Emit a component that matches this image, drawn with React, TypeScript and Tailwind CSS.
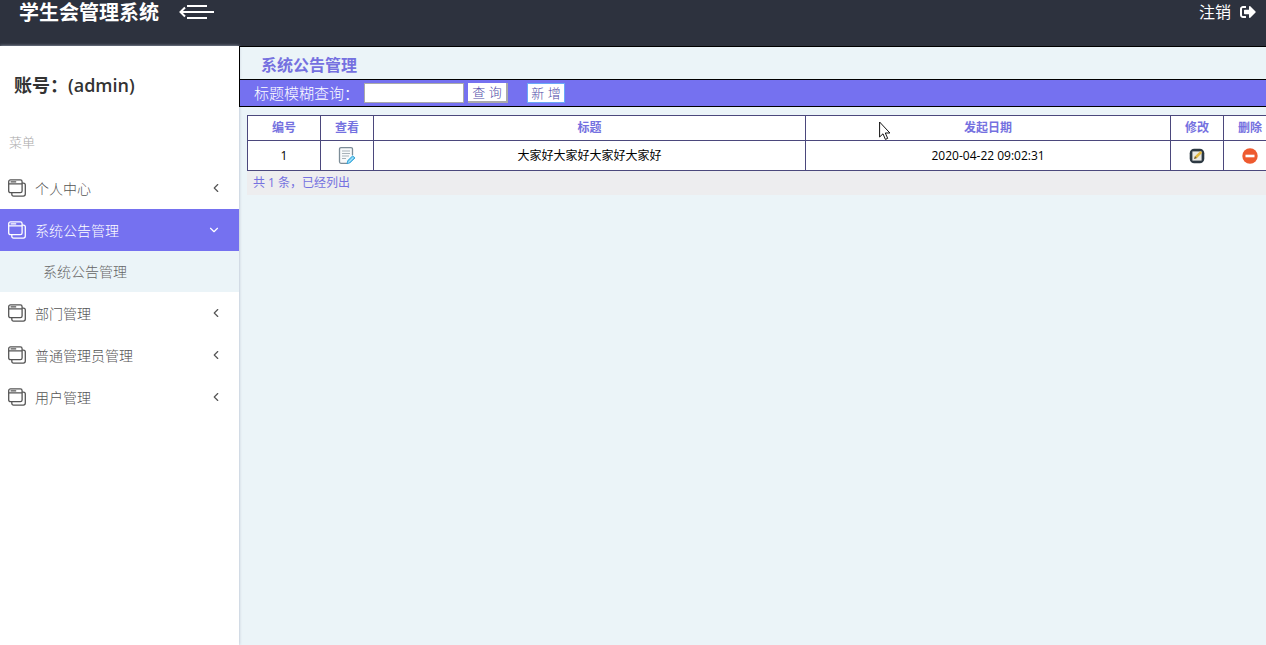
import { ChevronDown, ChevronLeft } from "lucide-react";
import { FaSignOutAlt } from "react-icons/fa";

const menus = [
  { title: "个人中心", children: [] },
  { title: "系统公告管理", active: true, children: ["系统公告管理"] },
  { title: "部门管理", children: [] },
  { title: "普通管理员管理", children: [] },
  { title: "用户管理", children: [] },
];

const notices = [{ id: 1, title: "大家好大家好大家好大家好", date: "2020-04-22 09:02:31" }];

const WindowsIcon = () => (
  <svg className="h-[18px] w-[18px] shrink-0" viewBox="0 0 18 18" fill="none" stroke="currentColor" strokeWidth="1.3">
    <rect x="0.7" y="0.9" width="13.4" height="12.8" rx="1.8" />
    <path d="M0.7 4.8h13.4M2.6 2.9h5.600" />
    <path d="M14.2 4.2h1.2q1.9 0 1.9 1.9v9q0 2-2 2H5.6q-1.8 0-1.8-1.9v-1.4" />
  </svg>
);

const ToggleIcon = () => (
  <svg className="h-4 w-9" viewBox="0 0 36 16" fill="none" stroke="currentColor" strokeWidth="2">
    <path d="M8 2h20M2 8h33M8 14h20" />
    <path d="M6 3.5L1.500 8l4.500 4.5" />
  </svg>
);

const ViewIcon = () => (
  <svg className="mx-auto h-[18px] w-[18px]" viewBox="0 0 18 18" fill="none">
    <path d="M14.5 8V2.2q0-1.5-1.5-1.5H3Q1.5.7 1.5 2.2v12.6q0 1.5 1.5 1.5h6" fill="#f8fafb" stroke="#7d8d98" strokeWidth="1.3" />
    <path d="M4 4h8M4 6.5h8M4 9h7M4 11.5h4" stroke="#a9b3ba" />
    <path d="M9 16.7l.8-3.2 5-4.8 2.2 2.300-5 4.8z" fill="#5fc4ee" stroke="#259ad2" strokeWidth="0.8" />
    <path d="M10.3 15.3l5-4.9" stroke="#d5f2ff" />
  </svg>
);

const EditIcon = () => (
  <svg className="mx-auto h-4 w-4" viewBox="0 0 16 16">
    <rect x="0.7" y="0.7" width="14.6" height="14.6" rx="4.5" fill="#2c3842" />
    <rect x="3.4" y="3.4" width="9.2" height="9.2" fill="#e9e9e4" />
    <path d="M5 11l1-2.8L11.4 3l1.8 1.7-5.4 5.500z" fill="#e2b83f" />
    <path d="M5 11l1-2.8 1.8 1.8z" fill="#6a5a3a" />
  </svg>
);

const DeleteIcon = () => (
  <svg className="mx-auto h-4 w-4" viewBox="0 0 16 16">
    <circle cx="8" cy="8" r="7.7" fill="#ee5a2f" />
    <rect x="3.5" y="6.7" width="9" height="2.6" fill="#fff" />
  </svg>
);

const Header = () => (
  <header className="flex h-[46px] shrink-0 items-start bg-[#2d323e] pr-2.5 pl-[19px] text-white">
    <h1 className="text-xl leading-[26px] font-bold">学生会管理系统</h1>
    <button type="button" aria-label="收起菜单" className="mt-1 ml-5">
      <ToggleIcon />
    </button>
    <a href="#logout" className="ml-auto flex items-center gap-[9px] text-base leading-6">
      注销
      <FaSignOutAlt className="h-4 w-4" />
    </a>
  </header>
);

const Sidebar = () => (
  <aside className="w-[239px] shrink-0 bg-white shadow-[0_0_3px_#aab4c4]">
    <h2 className="pt-[23px] pl-3.5 text-lg leading-8 font-semibold text-[#333]">账号：(admin)</h2>
    <p className="mt-8 mb-[15px] pl-[9px] text-[13px] leading-[19px] font-light text-[#aaa]">菜单</p>
    <nav>
      {menus.map((item) => (
        <div key={item.title}>
          <a
            href="#menu"
            className={`flex h-[42px] items-center gap-[9px] pr-4 pl-2 text-sm font-light ${
              item.active ? "bg-[#7571f0] text-white" : "text-[#555]"
            }`}
          >
            <WindowsIcon />
            <span className="grow pt-0.5">{item.title}</span>
            {item.active ? <ChevronDown className="mr-0.5 h-3.5 w-3.5" /> : <ChevronLeft className="h-3.5 w-3.5" />}
          </a>
          {item.children.map((child) => (
            <a key={child} href="#notice" className="flex h-[41px] items-center bg-[#ebf4f8] pl-[43px] text-sm font-light text-[#666]">
              {child}
            </a>
          ))}
        </div>
      ))}
    </nav>
  </aside>
);

const NoticeTable = () => (
  <table className="w-[calc(100%+11px)] table-fixed border-collapse bg-white text-center text-xs text-black">
    <colgroup>
      <col className="w-[73px]" />
      <col className="w-[53px]" />
      <col className="w-[42%]" />
      <col />
      <col className="w-[53px]" />
      <col className="w-[53px]" />
    </colgroup>
    <thead>
      <tr className="h-[25px] text-[#7571e0]">
        {["编号", "查看", "标题", "发起日期", "修改", "删除"].map((name) => (
          <th key={name} className="border border-[#4b487c] font-bold">
            {name}
          </th>
        ))}
      </tr>
    </thead>
    <tbody>
      {notices.map((item) => (
        <tr key={item.id} className="h-[30px]">
          <td className="border border-[#4b487c]">{item.id}</td>
          <td className="border border-[#4b487c]">
            <button type="button" aria-label="查看" className="block w-full">
              <ViewIcon />
            </button>
          </td>
          <td className="border border-[#4b487c]">{item.title}</td>
          <td className="border border-[#4b487c]">{item.date}</td>
          <td className="border border-[#4b487c]">
            <button type="button" aria-label="修改" className="block w-full">
              <EditIcon />
            </button>
          </td>
          <td className="border border-[#4b487c]">
            <button type="button" aria-label="删除" className="block w-full">
              <DeleteIcon />
            </button>
          </td>
        </tr>
      ))}
    </tbody>
  </table>
);

const Cursor = () => (
  <svg className="absolute top-[121px] left-[879px] h-5 w-3" viewBox="0 0 12 20">
    <path d="M.6 1v15l3.4-3.2 2.4 5.600 2.3-1-2.4-5.4h4.6z" fill="#fff" stroke="#111" />
  </svg>
);

export default function App() {
  return (
    <div className="relative flex min-h-screen flex-col overflow-hidden bg-[#ebf4f8] font-['Open_Sans','Noto_Sans_CJK_SC',sans-serif]">
      <Header />
      <div className="flex grow">
        <Sidebar />
        <main className="min-w-0 grow">
          <section className="border border-r-0 border-black">
            <h3 className="h-8 pl-[21px] text-base leading-9 font-bold text-[#7571e0]">系统公告管理</h3>
            <form className="flex h-[27px] items-center border-t border-black bg-[#7571f0] pl-3.5 text-white">
              <label htmlFor="keyword" className="text-[15px] leading-6 font-light">
                标题模糊查询：
              </label>
              <input id="keyword" type="text" className="ml-[5px] h-5 w-[100px] border border-[#aaa] bg-white px-1 text-xs text-black" />
              <button type="button" className="ml-1 h-5 w-10 border-r-2 border-b-2 border-[#aaa] bg-white text-[13px] leading-[18px] font-light text-[#4f4aa8]">
                查 询
              </button>
              <button type="button" className="ml-[19px] h-5 w-[38px] border border-[#6aa8f8] bg-white text-[13px] leading-[18px] font-light text-[#4f4aa8]">
                新 增
              </button>
            </form>
          </section>
          <section className="pt-2 pl-2">
            <NoticeTable />
            <p className="h-6 bg-[#ededef] pl-1.5 text-xs leading-6 text-[#7571e0]">共 1 条，已经列出</p>
          </section>
        </main>
      </div>
      <Cursor />
    </div>
  );
}
